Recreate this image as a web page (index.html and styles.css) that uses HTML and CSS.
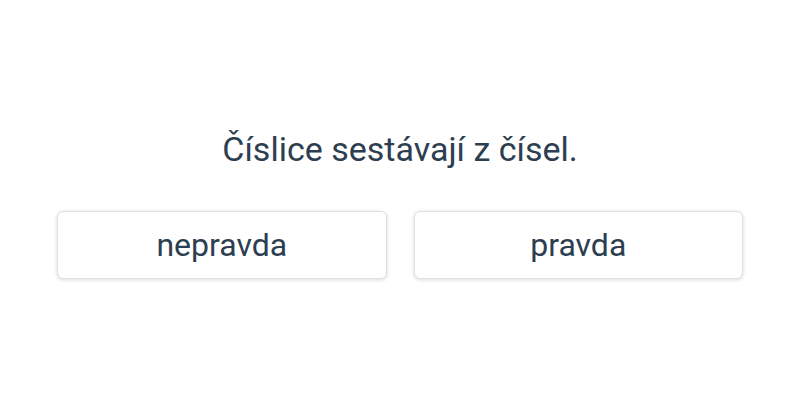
FILE: index.html
```html
<!DOCTYPE html>
<html lang="cs">
<head>
<meta charset="utf-8">
<link rel="stylesheet" href="styles.css">
</head>
<body>
<main class="quiz">
  <h1 class="question">Číslice sestávají z čísel.</h1>
  <div class="answers">
    <button class="answer">nepravda</button>
    <button class="answer">pravda</button>
  </div>
</main>
</body>
</html>
```

FILE: styles.css
```css
html, body {
  margin: 0;
  padding: 0;
  background: #ffffff;
}
body {
  font-family: Roboto, "Noto Sans", sans-serif;
  color: #2c3e50;
}
.quiz {
  box-sizing: border-box;
  height: 400px;
  padding: 8px 57px 0;
  display: flex;
  flex-direction: column;
  justify-content: center;
  align-items: stretch;
}
.question {
  margin: 0 0 42px;
  font-size: 34px;
  font-weight: 400;
  text-align: center;
  line-height: 40px;
}
.answers {
  display: flex;
  gap: 27px;
}
.answer {
  flex: 1;
  height: 68px;
  background: #fff;
  border: 1px solid #e0e0e0;
  border-radius: 6px;
  box-shadow: 0 1px 4px rgba(0,0,0,0.14);
  font-family: Roboto, "Noto Sans", sans-serif;
  font-size: 32px;
  color: #2c3e50;
  padding: 0;
}
```
